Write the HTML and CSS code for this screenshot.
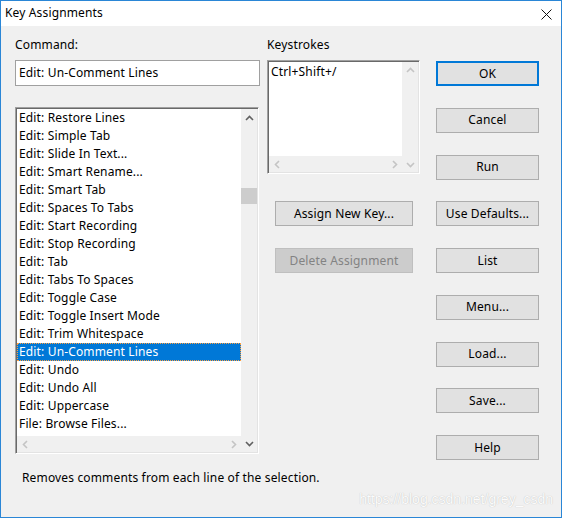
FILE: index.html
```html
<!DOCTYPE html>
<html>
<head>
<meta charset="utf-8">
<link rel="stylesheet" href="styles.css">
</head>
<body>
<div class="window">
  <div class="titlebar">
    <span class="title">Key Assignments</span>
    <svg class="close" width="11" height="11" viewBox="0 0 11 11"><path d="M0.5 0.5 L10.5 10.5 M10.5 0.5 L0.5 10.5" stroke="#111" stroke-width="1"/></svg>
  </div>
  <div class="body">
    <div class="main">
      <div class="col-left">
        <div class="label">Command:</div>
        <div class="input">Edit: Un-Comment Lines</div>
        <div class="listbox">
          <div class="items">
            <div class="item">Edit: Restore Lines</div>
            <div class="item">Edit: Simple Tab</div>
            <div class="item">Edit: Slide In Text...</div>
            <div class="item">Edit: Smart Rename...</div>
            <div class="item">Edit: Smart Tab</div>
            <div class="item">Edit: Spaces To Tabs</div>
            <div class="item">Edit: Start Recording</div>
            <div class="item">Edit: Stop Recording</div>
            <div class="item">Edit: Tab</div>
            <div class="item">Edit: Tabs To Spaces</div>
            <div class="item">Edit: Toggle Case</div>
            <div class="item">Edit: Toggle Insert Mode</div>
            <div class="item">Edit: Trim Whitespace</div>
            <div class="item selected">Edit: Un-Comment Lines</div>
            <div class="item">Edit: Undo</div>
            <div class="item">Edit: Undo All</div>
            <div class="item">Edit: Uppercase</div>
            <div class="item">File: Browse Files...</div>
            <div class="item">File: Close All Files</div>
          </div>
          <div class="vscroll">
            <div class="arrow"><svg width="9" height="6" viewBox="0 0 9 6"><path d="M1 5 L4.5 1.5 L8 5" fill="none" stroke="#606060" stroke-width="1.6"/></svg></div>
            <div class="track"><div class="thumb"></div></div>
            <div class="arrow"><svg width="9" height="6" viewBox="0 0 9 6"><path d="M1 1 L4.5 4.5 L8 1" fill="none" stroke="#606060" stroke-width="1.6"/></svg></div>
          </div>
          <div class="hscroll">
            <div class="arrow"><svg width="6" height="9" viewBox="0 0 6 9"><path d="M5 1 L1.5 4.5 L5 8" fill="none" stroke="#c4c4c4" stroke-width="1.6"/></svg></div>
            <div class="arrow"><svg width="6" height="9" viewBox="0 0 6 9"><path d="M1 1 L4.5 4.5 L1 8" fill="none" stroke="#c4c4c4" stroke-width="1.6"/></svg></div>
          </div>
        </div>
      </div>
      <div class="col-mid">
        <div class="label">Keystrokes</div>
        <div class="keybox">
          <div class="keys">Ctrl+Shift+/</div>
          <div class="vscroll">
            <div class="arrow"><svg width="9" height="6" viewBox="0 0 9 6"><path d="M1 5 L4.5 1.5 L8 5" fill="none" stroke="#c4c4c4" stroke-width="1.6"/></svg></div>
            <div class="track"></div>
            <div class="arrow"><svg width="9" height="6" viewBox="0 0 9 6"><path d="M1 1 L4.5 4.5 L8 1" fill="none" stroke="#c4c4c4" stroke-width="1.6"/></svg></div>
          </div>
          <div class="hscroll">
            <div class="arrow"><svg width="6" height="9" viewBox="0 0 6 9"><path d="M5 1 L1.5 4.5 L5 8" fill="none" stroke="#c4c4c4" stroke-width="1.6"/></svg></div>
            <div class="arrow"><svg width="6" height="9" viewBox="0 0 6 9"><path d="M1 1 L4.5 4.5 L1 8" fill="none" stroke="#c4c4c4" stroke-width="1.6"/></svg></div>
          </div>
        </div>
        <button class="btn mid-btn assign">Assign New Key...</button>
        <button class="btn mid-btn delete" disabled>Delete Assignment</button>
      </div>
      <div class="col-right">
        <button class="btn default">OK</button>
        <button class="btn">Cancel</button>
        <button class="btn">Run</button>
        <button class="btn">Use Defaults...</button>
        <button class="btn">List</button>
        <button class="btn">Menu...</button>
        <button class="btn">Load...</button>
        <button class="btn">Save...</button>
        <button class="btn">Help</button>
      </div>
    </div>
    <div class="status">Removes comments from each line of the selection.</div>
    <div class="watermark">https://blog.csdn.net/grey_csdn</div>
  </div>
</div>
</body>
</html>
```

FILE: styles.css
```css
* { box-sizing: border-box; }
html, body { margin: 0; padding: 0; }
body {
  width: 562px;
  height: 518px;
  overflow: hidden;
  font-family: "Noto Sans", "Open Sans", sans-serif;
  font-size: 12px;
  letter-spacing: 0.15px;
  color: #000;
}
.window {
  width: 562px;
  height: 518px;
  border: 1px solid #2a86d6;
  background: #f0f0f0;
  display: flex;
  flex-direction: column;
}
.titlebar {
  height: 25px;
  background: #fff;
  display: flex;
  align-items: center;
  justify-content: space-between;
  padding: 0 9px 0 4px;
  flex: none;
}
.title { line-height: 18px; margin-top: -1px; }
.close { display: block; margin-top: 1px; }
.body {
  position: relative;
  flex: 1;
}
.main {
  display: flex;
  padding: 10px 0 0 14px;
}
.label { line-height: 18px; height: 18px; }
.col-left { width: 245px; display: flex; flex-direction: column; }
.col-left .input {
  margin-top: 6px;
  height: 26px;
  background: #fff;
  border: 1px solid #a0a0a0;
  padding: 0 3px;
  line-height: 23px;
}
.listbox {
  margin-top: 21px;
  width: 244px;
  height: 347px;
  background: #fff;
  border: 1px solid;
  border-color: #a0a0a0 #ffffff #ffffff #a0a0a0;
  box-shadow: inset 1px 1px 0 #696969, inset -1px -1px 0 #e3e3e3;
  padding: 1px;
  display: grid;
  grid-template-columns: 1fr 16px;
  grid-template-rows: 1fr 16px;
}
.items {
  grid-column: 1;
  grid-row: 1;
  overflow: hidden;
}
.item {
  height: 18px;
  line-height: 18px;
  padding-left: 2px;
  white-space: nowrap;
}
.item.selected {
  background: #0078d7;
  color: #fff;
  outline: 1px dotted #ffa040;
  outline-offset: -1px;
}
.vscroll {
  grid-column: 2;
  grid-row: 1 / 3;
  background: #f0f0f0;
  display: flex;
  flex-direction: column;
}
.vscroll .arrow {
  height: 17px;
  display: flex;
  align-items: center;
  justify-content: center;
  flex: none;
}
.vscroll .track { flex: 1; }
.thumb {
  margin-top: 62px;
  height: 16px;
  background: #cdcdcd;
}
.hscroll {
  grid-column: 1;
  grid-row: 2;
  background: #f0f0f0;
  display: flex;
  justify-content: space-between;
  align-items: center;
  padding: 0 4px 0 5px;
}
.hscroll .arrow { display: flex; }
.col-mid {
  width: 153px;
  margin-left: 7px;
  display: flex;
  flex-direction: column;
}
.keybox {
  margin-top: 6px;
  height: 114px;
  background: #fff;
  border: 1px solid;
  border-color: #a0a0a0 #ffffff #ffffff #a0a0a0;
  box-shadow: inset 1px 1px 0 #696969, inset -1px -1px 0 #e3e3e3;
  padding: 1px;
  display: grid;
  grid-template-columns: 1fr 16px;
  grid-template-rows: 1fr 16px;
}
.keys {
  grid-column: 1;
  grid-row: 1;
  padding: 1px 0 0 2px;
  line-height: 18px;
}
.keybox .vscroll .arrow { height: 15px; }
.btn {
  font: inherit;
  letter-spacing: inherit;
  color: #000;
  height: 25px;
  background: #e1e1e1;
  border: 1px solid #adadad;
  padding: 0;
  margin: 0;
  line-height: 22px;
  text-align: center;
}
.mid-btn {
  width: 138px;
  margin-left: 8px;
}
.assign { margin-top: 27px; }
.delete {
  margin-top: 22px;
  background: #cccccc;
  border-color: #bfbfbf;
  color: #838383;
}
.col-right {
  width: 103px;
  margin-left: 16px;
  padding-top: 25px;
  display: flex;
  flex-direction: column;
  gap: 21.75px;
}
.btn.default {
  border: 2px solid #0078d7;
}
.status {
  padding-left: 21px;
  margin-top: 9px;
  line-height: 18px;
}
.watermark {
  position: absolute;
  right: 8px;
  bottom: 10px;
  font-family: "Liberation Sans", Arial, sans-serif;
  font-size: 14px;
  line-height: 16px;
  letter-spacing: 0;
  color: #fbfbfb;
  text-shadow: 0 0 1px #b4b4b4;
}
```
